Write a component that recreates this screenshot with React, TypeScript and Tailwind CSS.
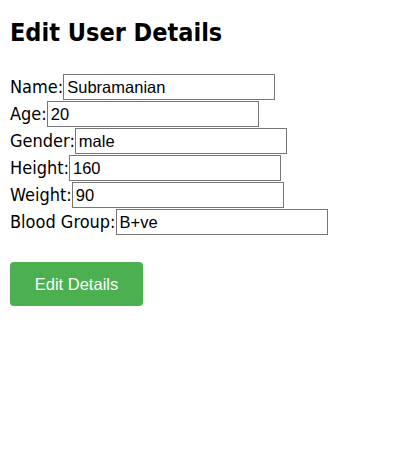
import { useState } from 'react'

const FIELDS = [
  { label: 'Name', value: 'Subramanian' },
  { label: 'Age', value: '20' },
  { label: 'Gender', value: 'male' },
  { label: 'Height', value: '160' },
  { label: 'Weight', value: '90' },
  { label: 'Blood Group', value: 'B+ve' },
]

export default function App() {
  const [values, setValues] = useState(FIELDS.map(f => f.value))

  return (
    <div className="min-h-[461px] bg-white px-[10px] pt-[16px] text-black [font-family:'Liberation_Sans_Narrow','DejaVu_Sans_Condensed',sans-serif]">
      <h2 className="text-[25px] font-bold leading-[34px]">Edit User Details</h2>
      <form className="mt-[24px] flex flex-col gap-[1px]" onSubmit={e => e.preventDefault()}>
        {FIELDS.map((f, i) => (
          <div key={f.label} className="flex items-center">
            <label className="text-[18px] leading-[26px]">{f.label}:</label>
            <input
              value={values[i]}
              onChange={e => {
                const next = [...values]
                next[i] = e.target.value
                setValues(next)
              }}
              className="h-[26px] w-[212px] border border-[#767676] px-[3px] text-[16.5px] [font-family:'Liberation_Sans',Arial,sans-serif]"
            />
          </div>
        ))}
        <button
          type="submit"
          className="mt-[26px] h-[44px] w-[133px] rounded-[4px] bg-[#4caf50] text-[16.5px] text-white [font-family:'Liberation_Sans',Arial,sans-serif]"
        >
          Edit Details
        </button>
      </form>
    </div>
  )
}
